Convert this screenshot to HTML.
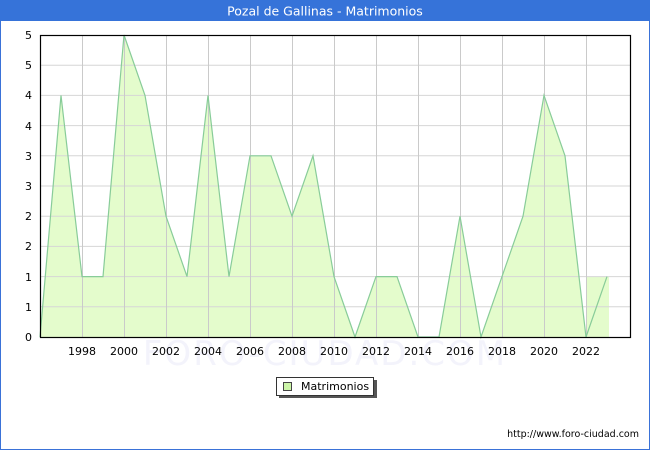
<!DOCTYPE html>
<html><head><meta charset="utf-8"><style>
body{margin:0;width:650px;height:450px;overflow:hidden;background:#fff;font-family:"DejaVu Sans","Liberation Sans",sans-serif}
</style></head><body>
<svg width="650" height="450" xmlns="http://www.w3.org/2000/svg" font-family="DejaVu Sans, Liberation Sans, sans-serif">
<rect x="0.5" y="0.5" width="649" height="449" fill="#fff" stroke="#3a72d8"/>
<rect x="0" y="0" width="650" height="21" fill="#3673d9"/>
<text x="325" y="15.5" fill="#fff" font-size="12.5" text-anchor="middle">Pozal de Gallinas - Matrimonios</text>
<text x="325" y="365" fill="#f3f3fb" font-size="34" text-anchor="middle" letter-spacing="2">FORO-CIUDAD.COM</text>
<polygon fill="#e4fccc" points="40,337 61,95.4 82,276.6 103,276.6 124,35 145,95.4 166,216.2 187,276.6 208,95.4 229,276.6 250,155.8 271,155.8 292,216.2 313,155.8 334,276.6 355,337 376,276.6 397,276.6 418,337 439,337 460,216.2 481,337 502,276.6 523,216.2 544,95.4 565,155.8 586,337 607,276.6 607,337"/>
<rect x="586" y="276.6" width="23" height="60.4" fill="#e4fccc"/>
<g stroke="#d6d6d6" stroke-width="1">
<line x1="40" x2="630" y1="65.2" y2="65.2"/><line x1="40" x2="630" y1="95.4" y2="95.4"/><line x1="40" x2="630" y1="125.6" y2="125.6"/><line x1="40" x2="630" y1="155.8" y2="155.8"/><line x1="40" x2="630" y1="186" y2="186"/><line x1="40" x2="630" y1="216.2" y2="216.2"/><line x1="40" x2="630" y1="246.4" y2="246.4"/><line x1="40" x2="630" y1="276.6" y2="276.6"/><line x1="40" x2="630" y1="306.8" y2="306.8"/>
</g>
<g stroke="#cacaca" stroke-width="1">
<line x1="82.5" x2="82.5" y1="35" y2="337"/><line x1="124.5" x2="124.5" y1="35" y2="337"/><line x1="166.5" x2="166.5" y1="35" y2="337"/><line x1="208.5" x2="208.5" y1="35" y2="337"/><line x1="250.5" x2="250.5" y1="35" y2="337"/><line x1="292.5" x2="292.5" y1="35" y2="337"/><line x1="334.5" x2="334.5" y1="35" y2="337"/><line x1="376.5" x2="376.5" y1="35" y2="337"/><line x1="418.5" x2="418.5" y1="35" y2="337"/><line x1="460.5" x2="460.5" y1="35" y2="337"/><line x1="502.5" x2="502.5" y1="35" y2="337"/><line x1="544.5" x2="544.5" y1="35" y2="337"/><line x1="586.5" x2="586.5" y1="35" y2="337"/>
</g>
<polyline fill="none" stroke="#88cc99" stroke-width="1.2" points="40,337 61,95.4 82,276.6 103,276.6 124,35 145,95.4 166,216.2 187,276.6 208,95.4 229,276.6 250,155.8 271,155.8 292,216.2 313,155.8 334,276.6 355,337 376,276.6 397,276.6 418,337 439,337 460,216.2 481,337 502,276.6 523,216.2 544,95.4 565,155.8 586,337 607,276.6"/>
<rect x="40.5" y="35.5" width="590" height="302" fill="none" stroke="#000" stroke-width="1.2"/>
<g font-size="11" fill="#000" text-anchor="end">
<text x="32" y="341">0</text><text x="32" y="311">1</text><text x="32" y="281">1</text><text x="32" y="250">2</text><text x="32" y="220">2</text><text x="32" y="190">3</text><text x="32" y="160">3</text><text x="32" y="130">4</text><text x="32" y="99">4</text><text x="32" y="69">5</text><text x="32" y="39">5</text>
</g>
<g font-size="11" fill="#000" text-anchor="middle">
<text x="82" y="355">1998</text><text x="124" y="355">2000</text><text x="166" y="355">2002</text><text x="208" y="355">2004</text><text x="250" y="355">2006</text><text x="292" y="355">2008</text><text x="334" y="355">2010</text><text x="376" y="355">2012</text><text x="418" y="355">2014</text><text x="460" y="355">2016</text><text x="502" y="355">2018</text><text x="544" y="355">2020</text><text x="586" y="355">2022</text>
</g>
<rect x="279" y="380" width="98" height="18" fill="#555"/>
<rect x="276.5" y="377.5" width="97" height="18" fill="#fff" stroke="#333"/>
<rect x="283.5" y="382.5" width="8" height="8" fill="#ccf5a8" stroke="#444"/>
<text x="301" y="390" font-size="11" fill="#000">Matrimonios</text>
<text x="639" y="437" font-size="9.5" fill="#000" text-anchor="end">http://www.foro-ciudad.com</text>
</svg>
</body></html>
